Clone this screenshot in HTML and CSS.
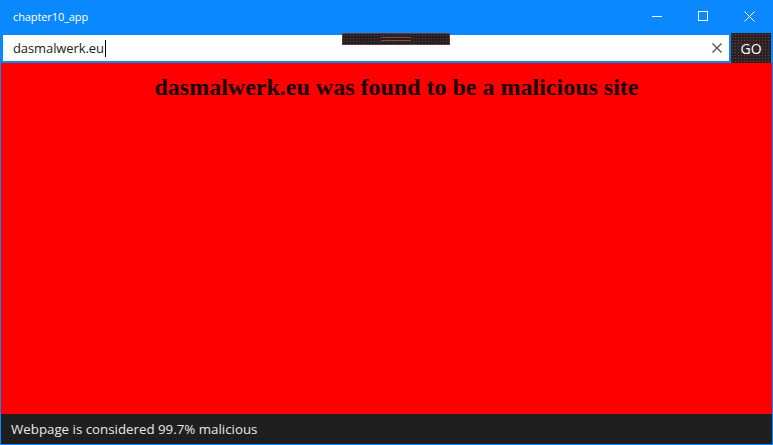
FILE: index.html
```html
<!DOCTYPE html>
<html>
<head>
<meta charset="utf-8">
<link rel="stylesheet" href="styles.css">
</head>
<body>
<div class="window">
  <div class="titlebar">
    <span class="title">chapter10_app</span>
    <div class="controls">
      <span class="ctl"><svg width="11" height="11" viewBox="0 0 11 11"><line x1="0" y1="5.5" x2="10" y2="5.5" stroke="#fff" stroke-width="1"/></svg></span>
      <span class="ctl"><svg width="11" height="11" viewBox="0 0 11 11"><rect x="0.5" y="0.5" width="9" height="9" fill="none" stroke="#fff" stroke-width="1"/></svg></span>
      <span class="ctl"><svg width="11" height="11" viewBox="0 0 11 11"><path d="M0.5 0.5 L10.5 10.5 M10.5 0.5 L0.5 10.5" stroke="#fff" stroke-width="1"/></svg></span>
    </div>
  </div>
  <div class="addressbar">
    <div class="input">
      <span class="value">dasmalwerk.eu</span><span class="caret"></span>
      <span class="clear"><svg width="10" height="10" viewBox="0 0 10 10"><path d="M0.5 0.5 L9.5 9.5 M9.5 0.5 L0.5 9.5" stroke="#5a4a4a" stroke-width="1.3"/></svg></span>
    </div>
    <div class="go">GO</div>
  </div>
  <div class="content">
    <h1 class="headline">dasmalwerk.eu was found to be a malicious site</h1>
  </div>
  <div class="status">Webpage is considered 99.7% malicious</div>
  <div class="debugbar"><span class="grip"></span></div>
</div>
</body>
</html>
```

FILE: styles.css
```css
html, body {
  margin: 0;
  padding: 0;
  width: 773px;
  height: 445px;
  overflow: hidden;
  background: #0a89ff;
}
.window {
  position: relative;
  width: 773px;
  height: 445px;
  box-sizing: border-box;
  border: 1px solid #0a89ff;
  border-top: none;
  background: #0a89ff;
  display: flex;
  flex-direction: column;
  font-family: "Open Sans", "Noto Sans", sans-serif;
}
.titlebar {
  height: 33px;
  display: flex;
  align-items: center;
  justify-content: space-between;
  color: #fff;
}
.title {
  padding-left: 12px;
  font-size: 11px;
  letter-spacing: -0.1px;
  margin-top: -1px;
}
.controls {
  display: flex;
  height: 33px;
}
.ctl {
  width: 46px;
  display: flex;
  align-items: center;
  justify-content: center;
  margin-top: -1px;
}
.addressbar {
  height: 30px;
  display: flex;
  background: #0a89ff;
}
.input {
  flex: 1;
  margin: 2px 2px 2px 2px;
  background: #fff;
  display: flex;
  align-items: center;
  padding-left: 10px;
  position: relative;
}
.value {
  font-size: 13px;
  color: #222;
  letter-spacing: -0.1px;
}
.caret {
  width: 1px;
  height: 17px;
  background: #000;
  margin-left: 1px;
}
.clear {
  position: absolute;
  right: 7px;
  top: 8px;
  display: flex;
}
.go {
  width: 40px;
  margin-right: 1px;
  background-color: #2a2225;
  background-image: radial-gradient(#7a3a3a 0.6px, transparent 0.8px);
  background-size: 3px 3px;
  color: #fff;
  font-size: 14px;
  display: flex;
  align-items: center;
  justify-content: center;
}
.content {
  flex: 1;
  background: #ff0000;
}
.headline {
  margin: 10px 0 0 0;
  padding-left: 20px;
  text-align: center;
  font-family: "Liberation Serif", "Times New Roman", serif;
  font-weight: bold;
  font-size: 24px;
  color: #1a0000;
  line-height: 28px;
}
.status {
  height: 30px;
  background-color: #1f1f1f;
  background-image: radial-gradient(#0c0c0c 0.7px, transparent 0.9px);
  background-size: 9px 9px;
  background-position: 4px 2px;
  color: #e8e8e8;
  font-size: 13.3px;
  display: flex;
  align-items: center;
  padding-left: 10px;
}
.debugbar {
  position: absolute;
  left: 341px;
  top: 33px;
  width: 108px;
  height: 12px;
  box-sizing: border-box;
  border: 1px solid #6a3a3a;
  background-color: #241f20;
  background-image: radial-gradient(#6a3535 0.5px, transparent 0.7px);
  background-size: 3px 3px;
  display: flex;
  align-items: center;
  justify-content: center;
}
.grip {
  width: 30px;
  height: 4px;
  box-sizing: border-box;
  border-top: 1px solid #8a4545;
  border-bottom: 1px solid #8a4545;
  background: #241f20;
}
```
